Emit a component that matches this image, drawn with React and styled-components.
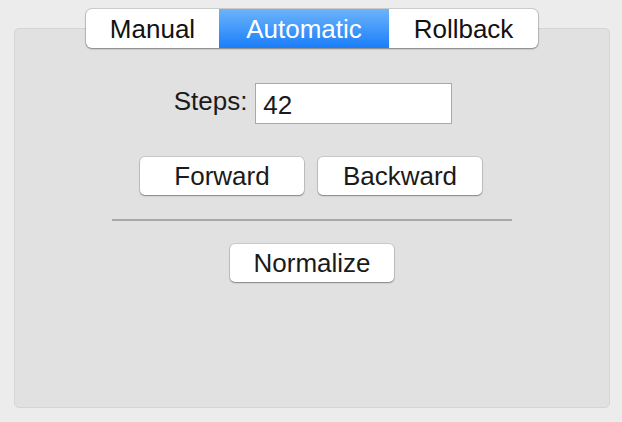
import React, { useState } from "react";
import styled, { createGlobalStyle } from "styled-components";

const GlobalStyle = createGlobalStyle`
  html, body {
    margin: 0;
    padding: 0;
    background: #ececec;
    font-family: "Liberation Sans", Arial, sans-serif;
    color: #1a1a1a;
  }
`;

const Window = styled.div`
  width: 622px;
  height: 422px;
  box-sizing: border-box;
  padding: 9px 12px 0 14px;
  display: flex;
  flex-direction: column;
  align-items: center;
`;

const TabBar = styled.div`
  position: relative;
  z-index: 1;
  display: flex;
  height: 39px;
  box-sizing: border-box;
  background: #fff;
  border-radius: 6px;
  box-shadow: 0 0 0 1px rgba(0, 0, 0, 0.12), 0 1px 2px rgba(0, 0, 0, 0.35);
  overflow: hidden;
`;

const Tab = styled.div`
  width: ${(p) => p.$w}px;
  display: flex;
  align-items: center;
  justify-content: center;
  font-size: 26px;
  padding-top: 1px;
  color: ${(p) => (p.$active ? "#fff" : "#111")};
  background: ${(p) =>
    p.$active ? "linear-gradient(#6db4fb, #1a7efa)" : "transparent"};
`;

const Panel = styled.div`
  align-self: stretch;
  margin-top: -20px;
  height: 380px;
  box-sizing: border-box;
  background: #e1e1e1;
  border: 1px solid #d5d5d5;
  border-radius: 5px;
  display: flex;
  flex-direction: column;
  align-items: center;
  padding-top: 54px;
`;

const StepsRow = styled.div`
  display: flex;
  align-items: flex-start;
  gap: 8px;
  margin-left: 2px;
`;

const Label = styled.label`
  font-size: 26px;
  line-height: 30px;
  margin-top: 3px;
`;

const Input = styled.input`
  width: 197px;
  height: 41px;
  box-sizing: border-box;
  border: 1px solid #a9a9a9;
  background: #fff;
  font-family: inherit;
  font-size: 26px;
  color: #1a1a1a;
  padding: 4px 0 0 7px;
  outline: none;
`;

const ButtonRow = styled.div`
  display: flex;
  gap: 14px;
  margin-top: 33px;
  margin-right: 2px;
`;

const Button = styled.button`
  width: 164px;
  height: 38px;
  box-sizing: border-box;
  background: #fff;
  border: none;
  border-radius: 5px;
  box-shadow: 0 0 0 1px rgba(0, 0, 0, 0.1), 0 1px 1.5px rgba(0, 0, 0, 0.35);
  font-family: inherit;
  font-size: 26px;
  color: #1a1a1a;
  padding: 0;
`;

const Separator = styled.hr`
  width: 400px;
  margin: 24px 0 0 0;
  border: none;
  border-top: 2px solid #a8a8a8;
`;

const NormalizeWrap = styled.div`
  margin-top: 23px;
`;

export default function App() {
  const [tab, setTab] = useState("Automatic");
  const [steps, setSteps] = useState("42");
  const tabs = [
    ["Manual", 133],
    ["Automatic", 170],
    ["Rollback", 149],
  ];
  return (
    <>
      <GlobalStyle />
      <Window>
        <TabBar>
          {tabs.map(([name, w]) => (
            <Tab key={name} $w={w} $active={tab === name} onClick={() => setTab(name)}>
              {name}
            </Tab>
          ))}
        </TabBar>
        <Panel>
          <StepsRow>
            <Label htmlFor="steps">Steps:</Label>
            <Input id="steps" value={steps} onChange={(e) => setSteps(e.target.value)} />
          </StepsRow>
          <ButtonRow>
            <Button>Forward</Button>
            <Button>Backward</Button>
          </ButtonRow>
          <Separator />
          <NormalizeWrap>
            <Button>Normalize</Button>
          </NormalizeWrap>
        </Panel>
      </Window>
    </>
  );
}
